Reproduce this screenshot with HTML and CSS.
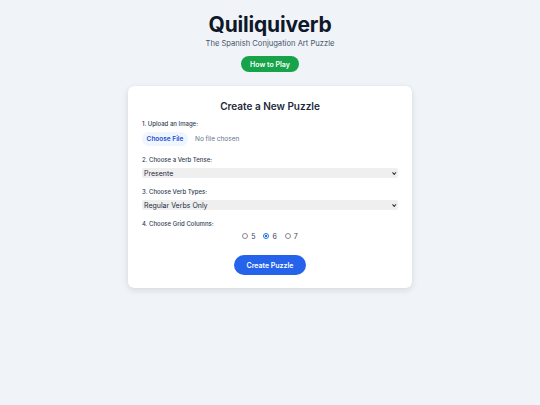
FILE: index.html
```html
<!DOCTYPE html>
<html lang="en">
<head>
<meta charset="utf-8">
<title>Quiliquiverb</title>
<link rel="stylesheet" href="styles.css">
</head>
<body>
<main class="page">
  <header class="hero">
    <h1 class="title">Quiliquiverb</h1>
    <p class="subtitle">The Spanish Conjugation Art Puzzle</p>
    <button class="btn-help" type="button">How to Play</button>
  </header>
  <section class="card">
    <h2 class="card-title">Create a New Puzzle</h2>
    <div class="field">
      <label class="label">1. Upload an Image:</label>
      <div class="file-row">
        <span class="file-btn">Choose File</span>
        <span class="file-name">No file chosen</span>
      </div>
    </div>
    <div class="field">
      <label class="label">2. Choose a Verb Tense:</label>
      <div class="select"><span>Presente</span><span class="chev"></span></div>
    </div>
    <div class="field">
      <label class="label">3. Choose Verb Types:</label>
      <div class="select"><span>Regular Verbs Only</span><span class="chev"></span></div>
    </div>
    <div class="field">
      <label class="label">4. Choose Grid Columns:</label>
      <div class="radios">
        <span class="radio-item"><span class="radio"></span>5</span>
        <span class="radio-item"><span class="radio checked"></span>6</span>
        <span class="radio-item"><span class="radio"></span>7</span>
      </div>
    </div>
    <div class="actions">
      <button class="btn-create" type="button">Create Puzzle</button>
    </div>
  </section>
</main>
</body>
</html>
```
FILE: styles.css
```css
* { box-sizing: border-box; }
html, body { margin: 0; padding: 0; }
body {
  background: #f0f4f8;
  font-family: Inter, "Noto Sans", sans-serif;
  color: #1e293b;
  width: 540px;
  height: 405px;
}
.page {
  display: flex;
  flex-direction: column;
  align-items: center;
  padding-top: 12px;
}
.hero {
  display: flex;
  flex-direction: column;
  align-items: center;
}
.title {
  margin: 0;
  font-size: 21px;
  font-weight: 700;
  line-height: 26px;
  color: #0f172a;
  letter-spacing: -0.2px;
}
.subtitle {
  margin: 0;
  font-size: 7.6px;
  line-height: 12px;
  color: #475569;
}
.btn-help {
  margin-top: 6px;
  border: 0;
  background: #16a34a;
  color: #fff;
  font-family: inherit;
  font-weight: 600;
  font-size: 7px;
  height: 16px;
  width: 58px;
  border-radius: 8px;
  padding: 0;
}
.card {
  margin-top: 14px;
  width: 284px;
  background: #fff;
  border-radius: 6px;
  box-shadow: 0 2px 6px rgba(15, 23, 42, 0.12), 0 0 1px rgba(15,23,42,0.08);
  padding: 12px 14px 13px;
}
.card-title {
  margin: 0 0 6px;
  text-align: center;
  font-size: 10px;
  line-height: 16px;
  font-weight: 600;
  color: #1e293b;
}
.field { margin-bottom: 10px; }
.label {
  display: block;
  font-size: 6px;
  line-height: 8px;
  font-weight: 500;
  color: #334155;
  margin-bottom: 4px;
}
.file-row {
  display: flex;
  align-items: center;
  gap: 7px;
}
.file-btn {
  background: #eff6ff;
  color: #1d4ed8;
  font-weight: 600;
  font-size: 6.5px;
  height: 14px;
  line-height: 14px;
  width: 46px;
  text-align: center;
  border-radius: 7px;
}
.file-name {
  font-size: 6.5px;
  color: #64748b;
}
.select {
  display: flex;
  align-items: center;
  justify-content: space-between;
  height: 10px;
  background: #efefef;
  border-radius: 2px;
  padding: 0 3px 0 2px;
  font-size: 7px;
  color: #1e293b;
}
.chev {
  width: 3px;
  height: 3px;
  border-right: 1px solid #333;
  border-bottom: 1px solid #333;
  transform: rotate(45deg) translateY(-1px);
}
.radios {
  display: flex;
  justify-content: center;
  align-items: center;
  height: 8px;
  gap: 8px;
  font-size: 7px;
  color: #334155;
}
.radio-item { display: flex; align-items: center; gap: 3px; }
.radio {
  width: 6px;
  height: 6px;
  border-radius: 50%;
  border: 1px solid #8a8a8a;
  background: #fff;
}
.radio.checked {
  border-color: #1a73e8;
  background: radial-gradient(circle, #1a73e8 45%, #fff 50%);
}
.actions {
  display: flex;
  justify-content: center;
  margin-top: -5px;
  padding-top: 10px;
}
.btn-create {
  border: 0;
  background: #2563eb;
  color: #fff;
  font-family: inherit;
  font-weight: 600;
  font-size: 7px;
  width: 72px;
  height: 20px;
  border-radius: 10px;
  padding: 0;
}
```
